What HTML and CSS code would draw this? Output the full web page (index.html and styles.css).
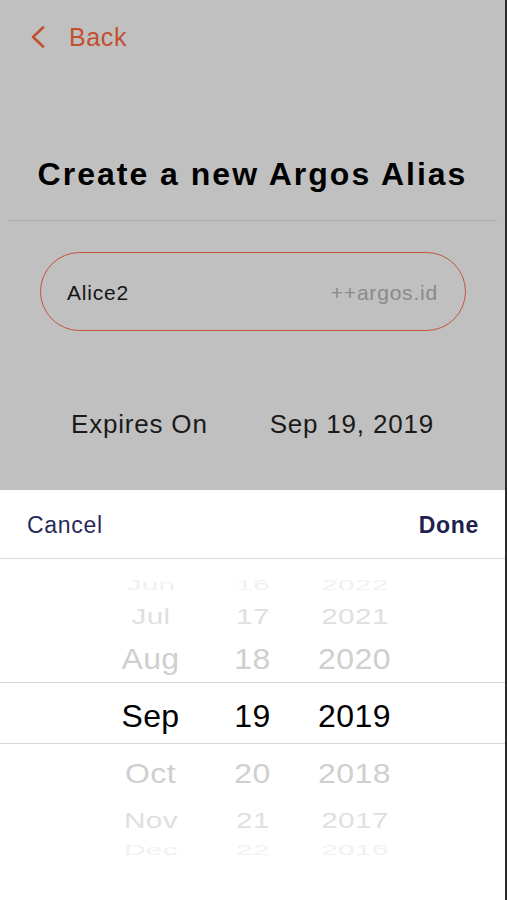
FILE: index.html
```html
<!DOCTYPE html>
<html lang="en">
<head>
  <meta charset="UTF-8" />
  <title>Create a new Argos Alias</title>
  <link rel="stylesheet" href="styles.css">
</head>
<body>
  <div class="screen">
    <!-- dimmed form behind the date sheet -->
    <div class="form-area">
      <nav class="topbar">
        <svg class="chevron" width="15" height="22" viewBox="0 0 15 22">
          <path d="M13 1.5 L3 11 L13 20.5" fill="none" stroke="#c2502f" stroke-width="2.6" stroke-linecap="round" stroke-linejoin="round" />
        </svg>
        <span class="back-label">Back</span>
      </nav>

      <h1 class="title">Create a new Argos Alias</h1>
      <div class="divider"></div>

      <div class="alias-field">
        <span class="alias-name">Alice2</span>
        <span class="alias-domain">++argos.id</span>
      </div>

      <div class="expires-row">
        <span>Expires On</span>
        <span>Sep 19, 2019</span>
      </div>
    </div>

    <!-- date picker sheet -->
    <div class="sheet">
      <div class="toolbar">
        <span class="cancel">Cancel</span>
        <span class="done">Done</span>
      </div>

      <div class="picker">
        <div class="wheel-row far top-far"><span>Jun</span><span>16</span><span>2022</span></div>
        <div class="wheel-row mid top-mid"><span>Jul</span><span>17</span><span>2021</span></div>
        <div class="wheel-row near top-near"><span>Aug</span><span>18</span><span>2020</span></div>
        <div class="wheel-row selected"><span>Sep</span><span>19</span><span>2019</span></div>
        <div class="wheel-row near bottom-near"><span>Oct</span><span>20</span><span>2018</span></div>
        <div class="wheel-row mid bottom-mid"><span>Nov</span><span>21</span><span>2017</span></div>
        <div class="wheel-row far bottom-far"><span>Dec</span><span>22</span><span>2016</span></div>
      </div>
    </div>
  </div>
</body>
</html>
```

FILE: styles.css
```css
/* ======= base ======= */
* {
  box-sizing: border-box;
  margin: 0;
  padding: 0;
}
body {
  font-family: "Liberation Sans", Arial, sans-serif;
  background: #fff;
  color: #1c1c1c;
}
.screen {
  width: 507px;
  height: 900px;
  overflow: hidden;
  border-right: 2px solid #2b2b2b;
  box-shadow: inset -2px 0 0 rgba(255, 255, 255, 0.35);
}

/* ======= dimmed form ======= */
.form-area {
  height: 490px;
  background: #c0c0c0;
  overflow: hidden;
}
.topbar {
  display: flex;
  align-items: center;
  height: 30px;
  margin-top: 22px;
  padding-left: 30px;
}
.chevron {
  display: block;
  margin-right: 24px;
}
.back-label {
  font-size: 25px;
  line-height: 30px;
  color: #c2502f;
  letter-spacing: 0.6px;
}
.title {
  margin-top: 102px;
  font-size: 32px;
  line-height: 40px;
  font-weight: bold;
  text-align: center;
  color: #000;
  letter-spacing: 2px;
}
.divider {
  height: 1px;
  margin: 26px 8px 0;
  background: #a9a9a9;
}
.alias-field {
  display: flex;
  align-items: center;
  justify-content: space-between;
  width: 426px;
  height: 79px;
  margin: 31px 0 0 40px;
  padding: 3px 27px 0 26px;
  border: 1.5px solid #c2553a;
  border-radius: 40px;
  font-size: 21px;
  letter-spacing: 0.8px;
}
.alias-name {
  color: #151515;
}
.alias-domain {
  color: #8a8a8a;
}
.expires-row {
  display: flex;
  justify-content: center;
  gap: 62px;
  margin-top: 76px;
  font-size: 26px;
  line-height: 34px;
  color: #1a1a1a;
  letter-spacing: 0.8px;
}

/* ======= sheet ======= */
.sheet {
  background: #fff;
}
.toolbar {
  display: flex;
  align-items: center;
  justify-content: space-between;
  height: 69px;
  padding: 2px 26px 0 27px;
  border-bottom: 1px solid #dadada;
  font-size: 23px;
  color: #29295a;
  letter-spacing: 0.7px;
}
.done {
  font-weight: bold;
  color: #1f1f50;
}

/* ======= wheel ======= */
.picker {
  padding-top: 16px;
}
.wheel-row {
  display: grid;
  grid-template-columns: repeat(3, 102px);
  justify-content: center;
  text-align: center;
  font-size: 32px;
  letter-spacing: 0.4px;
}
.wheel-row span {
  display: block;
}
.wheel-row.selected {
  height: 62px;
  padding-top: 6px;
  line-height: 54px;
  color: #000;
  border-top: 1px solid #d7d7d7;
  border-bottom: 1px solid #d7d7d7;
}
.wheel-row.near {
  color: #cfcfcf;
}
.wheel-row.mid {
  color: #e0e0e0;
}
.wheel-row.far {
  color: #f1f1f1;
}
.top-far {
  height: 21px;
  line-height: 21px;
}
.top-far span,
.bottom-far span {
  transform: scale(0.93, 0.43);
}
.top-mid {
  height: 41px;
  line-height: 41px;
}
.top-mid span,
.bottom-mid span {
  transform: scale(0.93, 0.7);
}
.top-near {
  height: 45px;
  line-height: 45px;
}
.top-near span {
  transform: scaleY(0.9);
}
.bottom-near {
  height: 59px;
  line-height: 59px;
}
.bottom-near span {
  transform: scaleY(0.87);
}
.bottom-mid {
  height: 34px;
  line-height: 34px;
}
.bottom-far {
  height: 26px;
  line-height: 26px;
}
```
